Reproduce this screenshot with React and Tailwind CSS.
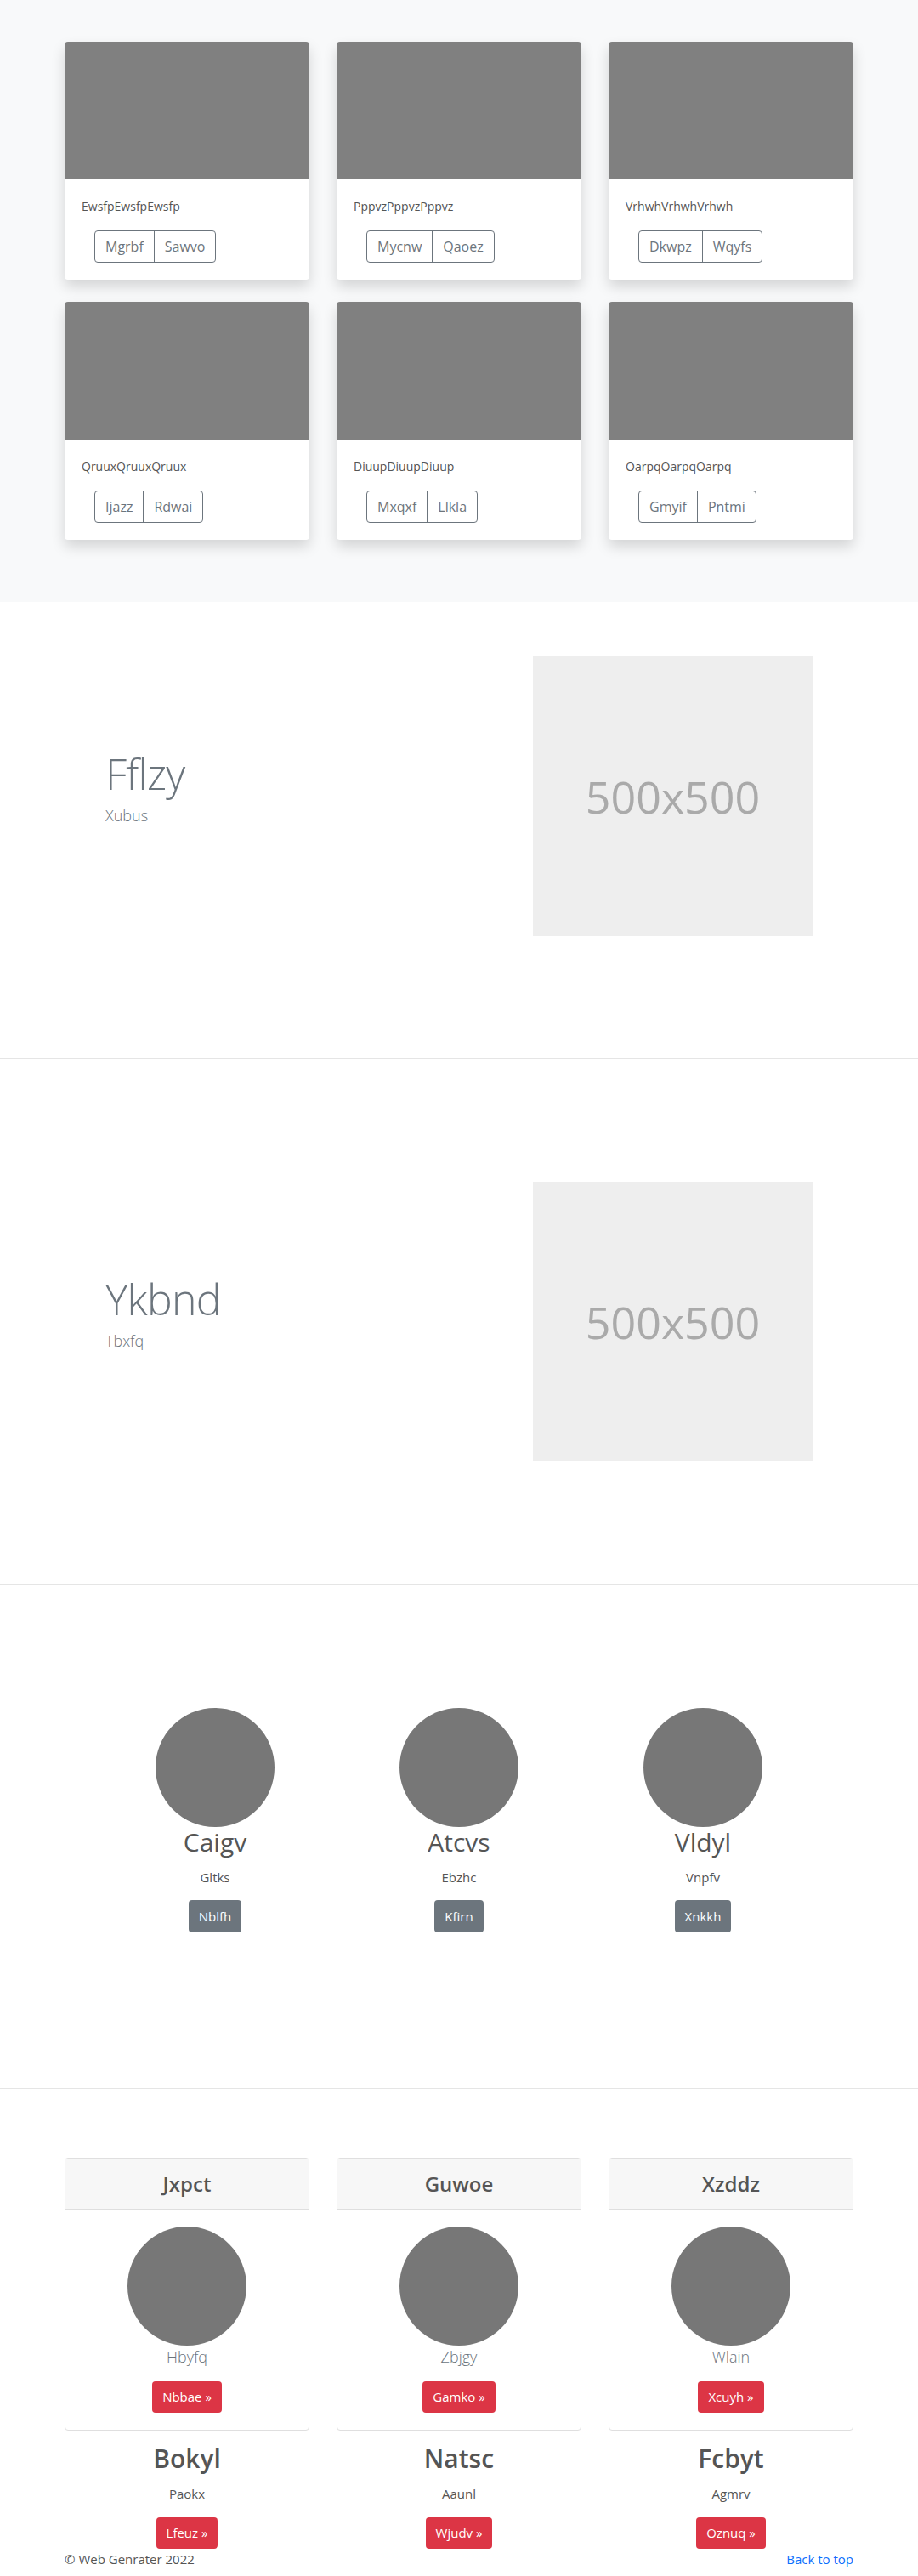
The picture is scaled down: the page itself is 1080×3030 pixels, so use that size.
const albums = [
  { title: 'EwsfpEwsfpEwsfp', a: 'Mgrbf', b: 'Sawvo' },
  { title: 'PppvzPppvzPppvz', a: 'Mycnw', b: 'Qaoez' },
  { title: 'VrhwhVrhwhVrhwh', a: 'Dkwpz', b: 'Wqyfs' },
  { title: 'QruuxQruuxQruux', a: 'Ijazz', b: 'Rdwai' },
  { title: 'DiuupDiuupDiuup', a: 'Mxqxf', b: 'Llkla' },
  { title: 'OarpqOarpqOarpq', a: 'Gmyif', b: 'Pntmi' },
];

const people = [
  { name: 'Caigv', sub: 'Gltks', btn: 'Nblfh' },
  { name: 'Atcvs', sub: 'Ebzhc', btn: 'Kfirn' },
  { name: 'Vldyl', sub: 'Vnpfv', btn: 'Xnkkh' },
];

const pricing = [
  { head: 'Jxpct', lead: 'Hbyfq', btn: 'Nbbae', name: 'Bokyl', sub: 'Paokx', btn2: 'Lfeuz' },
  { head: 'Guwoe', lead: 'Zbjgy', btn: 'Gamko', name: 'Natsc', sub: 'Aaunl', btn2: 'Wjudv' },
  { head: 'Xzddz', lead: 'Wlain', btn: 'Xcuyh', name: 'Fcbyt', sub: 'Agmrv', btn2: 'Oznuq' },
];

function AlbumCard({ title, a, b }) {
  return (
    <div className="overflow-hidden rounded bg-white shadow-[0_8px_16px_rgba(0,0,0,0.15)]">
      <div className="h-[162px] bg-[#808080]" />
      <div className="px-5 pt-5 pb-5">
        <p className="text-[14px] leading-6 text-[#555]">{title}</p>
        <div className="mt-4 ml-[15px] inline-flex h-[38px] overflow-hidden rounded border border-[#6c757d] text-[16px] text-[#6c757d]">
          <span className="flex items-center px-3">{a}</span>
          <span className="flex items-center border-l border-[#6c757d] px-3">{b}</span>
        </div>
      </div>
    </div>
  );
}

function Featurette({ title, lead, top }) {
  return (
    <section className={`border-b border-[#e5e5e5] pb-[144px] ${top}`}>
      <div className="flex items-center justify-between px-[124px]">
        <div>
          <h2 className="mb-[11px] text-[50px] leading-none font-light tracking-[-0.8px] text-[#6c757d]">
            {title}
          </h2>
          <p className="mb-4 text-[18px] leading-[27px] font-light text-[#6c757d]">{lead}</p>
        </div>
        <div className="flex h-[329px] w-[329px] items-center justify-center bg-[#eeeeee] text-[52px] text-[#aaaaaa]">
          500x500
        </div>
      </div>
    </section>
  );
}

export default function App() {
  return (
    <div className="w-full bg-white font-['Open_Sans',sans-serif] text-[#555]">
      {/* album */}
      <section className="bg-[#f8f9fa] pt-[49px] pb-[73px]">
        <div className="mx-auto grid w-[928px] grid-cols-3 gap-x-8 gap-y-[26px]">
          {albums.map((c) => (
            <AlbumCard key={c.title} {...c} />
          ))}
        </div>
      </section>

      {/* featurettes */}
      <Featurette title="Fflzy" lead="Xubus" top="pt-[64px]" />
      <Featurette title="Ykbnd" lead="Tbxfq" top="pt-[144px]" />

      {/* marketing */}
      <section className="border-b border-[#e5e5e5] pt-[145px] pb-[183px]">
        <div className="mx-auto grid w-[861px] grid-cols-3">
          {people.map((p) => (
            <div key={p.name} className="flex flex-col items-center">
              <div className="h-[140px] w-[140px] rounded-full bg-[#777]" />
              <h2 className="text-[30px] leading-[36px] text-[#555]">{p.name}</h2>
              <p className="mt-[11px] text-[15px] leading-6 text-[#555]">{p.sub}</p>
              <button className="mt-[15px] h-[38px] rounded bg-[#6c757d] px-3 text-[15px] text-white">
                {p.btn}
              </button>
            </div>
          ))}
        </div>
      </section>

      {/* pricing */}
      <section className="pt-[81px]">
        <div className="mx-auto grid w-[928px] grid-cols-3 gap-x-8">
          {pricing.map((p) => (
            <div key={p.head} className="rounded border border-[#dfdfdf]">
              <div className="flex h-[60px] items-center justify-center border-b border-[#dfdfdf] bg-[#f7f7f7] text-[24px] font-semibold text-[#555]">
                {p.head}
              </div>
              <div className="flex flex-col items-center px-5 pt-5 pb-5">
                <div className="h-[140px] w-[140px] rounded-full bg-[#777]" />
                <p className="text-[18px] leading-[27px] font-light text-[#6c757d]">{p.lead}</p>
                <button className="mt-[15px] h-[37px] rounded bg-[#dc3545] px-3 text-[15px] text-white">
                  {p.btn} »
                </button>
              </div>
            </div>
          ))}
          {pricing.map((p) => (
            <div key={p.name} className="mt-[15px] flex flex-col items-center">
              <h2 className="text-[30px] leading-[36px] font-semibold text-[#555]">{p.name}</h2>
              <p className="mt-[11px] text-[15px] leading-6 text-[#555]">{p.sub}</p>
              <button className="mt-4 h-[37px] rounded bg-[#dc3545] px-3 text-[15px] text-white">
                {p.btn2} »
              </button>
            </div>
          ))}
        </div>
        <footer className="mx-auto flex w-[928px] justify-between text-[15px] leading-6">
          <span className="text-[#555]">© Web Genrater 2022</span>
          <a href="#" className="text-[#0d6efd]">Back to top</a>
        </footer>
      </section>
    </div>
  );
}
